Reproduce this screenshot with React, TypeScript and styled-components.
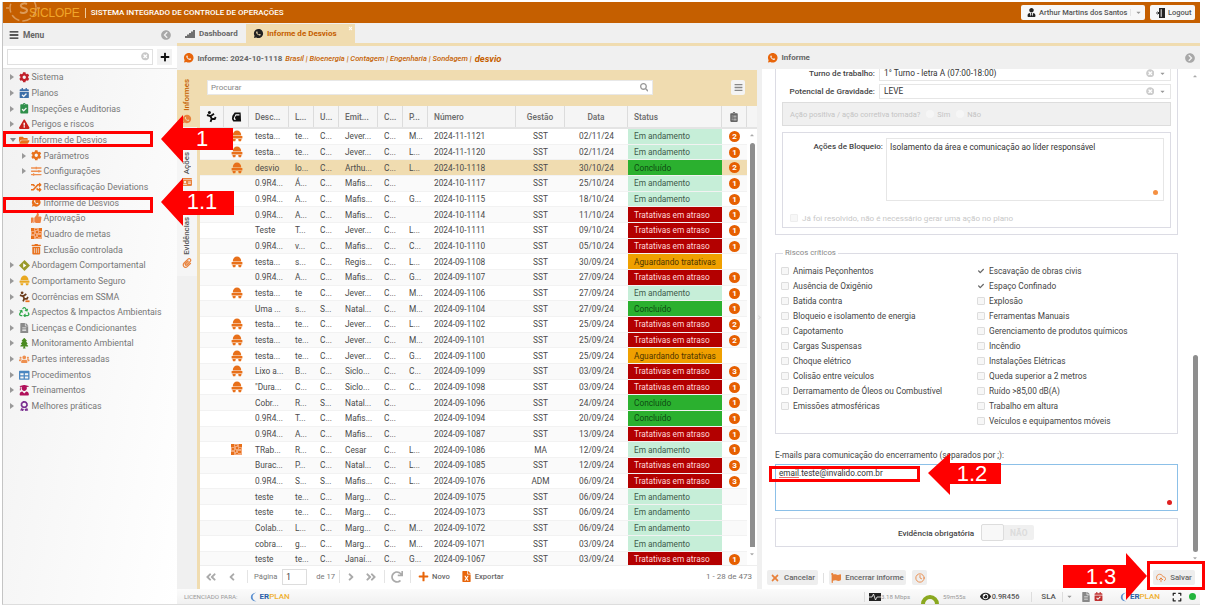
import React from 'react';
import styled, { createGlobalStyle } from 'styled-components';
import {
  FaAngleDoubleLeft,
  FaAngleDoubleRight,
  FaAngleLeft,
  FaAngleRight,
  FaAward,
  FaBars,
  FaCalendarCheck,
  FaCaretDown,
  FaCaretUp,
  FaCheck,
  FaChevronCircleLeft,
  FaChevronCircleRight,
  FaClipboardCheck,
  FaClipboardList,
  FaCog,
  FaExclamationTriangle,
  FaExpand,
  FaEye,
  FaFileAlt,
  FaFileExcel,
  FaFlag,
  FaFolderOpen,
  FaIdCard,
  FaPaperclip,
  FaPlus,
  FaRandom,
  FaRecycle,
  FaRedo,
  FaSearch,
  FaSignal,
  FaSlidersH,
  FaTable,
  FaThumbsUp,
  FaTimes,
  FaTimesCircle,
  FaTrashAlt,
  FaTree,
  FaUsers,
  FaUserGraduate,
  FaUserTie,
} from 'react-icons/fa';
import { FiClock, FiUploadCloud } from 'react-icons/fi';
import { RiWhatsappFill } from 'react-icons/ri';

const ORANGE = '#c55f00';
const BEIGE = '#f0dcb0';
const TABLE_COLUMNS = '24px 25px 40px 25px 25px 39px 25px 25px 88px 49px 63px 94px 25px';

const GlobalStyle = createGlobalStyle`
  html, body {
    margin: 0;
    padding: 0;
    background: #fff;
    overflow: hidden;
    font-family: Roboto, "Liberation Sans", sans-serif;
  }
  * { box-sizing: border-box; }
`;

const Page = styled.div`
  position: relative;
  width: 1205px;
  height: 607px;
  overflow: hidden;
  padding: 2px 5px 2px 2px;
`;

const Frame = styled.div`
  height: 603px;
  display: flex;
  flex-direction: column;
  border-left: 1px solid #c4c4c4;
  border-bottom: 1px solid #ddd;
`;

const Header = styled.header`
  height: 21px;
  flex: none;
  display: flex;
  align-items: center;
  background: ${ORANGE};
  color: #fff;
  overflow: hidden;
  position: relative;
`;

const LogoMark = styled.svg`
  width: 36px;
  height: 32px;
  flex: none;
  margin-left: 2px;
`;

const LogoName = styled.span`
  font-family: 'Liberation Sans', sans-serif;
  font-size: 12px;
  letter-spacing: -0.2px;
  color: #f0a52a;
  margin-left: -12px;
`;

const HeaderTitle = styled.span`
  font-size: 8px;
  font-weight: 500;
  margin-left: 5px;
  padding-left: 5px;
  border-left: 1px solid #eecb9f;
  line-height: 10px;
`;

const HeaderActions = styled.div`
  margin-left: auto;
  display: flex;
  gap: 5px;
  padding-right: 5px;
`;

const HeaderButton = styled.div<{ $width: number }>`
  width: ${(p) => p.$width}px;
  height: 15px;
  display: flex;
  align-items: center;
  gap: 3px;
  padding: 0 5px 0 6px;
  background: #f8f8f8;
  border-radius: 2px;
  color: #555;
  font-size: 7.5px;
  font-weight: 500;
  white-space: nowrap;
  svg { color: #222; font-size: 9px; flex: none; }
`;

const HeaderCaret = styled.span`
  display: flex;
  margin-left: auto;
  padding-left: 4px;
  border-left: 1px solid #e4e4e4;
  svg { color: #999; font-size: 7px; }
`;

const Body = styled.div`
  flex: 1;
  min-height: 0;
  display: flex;
`;

const Sidebar = styled.aside`
  width: 174px;
  flex: none;
  display: flex;
  flex-direction: column;
  background: linear-gradient(100deg, #f1f1f1, #fff);
`;

const SidebarHead = styled.div`
  height: 23px;
  flex: none;
  display: flex;
  align-items: center;
  padding: 0 6px;
  background: #f0f0f0;
  color: #666;
  font-size: 8.4px;
  font-weight: 700;
  svg:first-child { color: #222; font-size: 10px; margin-right: 4px; }
  svg:last-child { color: #a8a8a8; font-size: 10px; margin-left: auto; margin-right: 0; }
`;

const SidebarSearch = styled.div`
  height: 23px;
  flex: none;
  display: flex;
  align-items: center;
  padding: 0 5px 1px 4px;
  gap: 4px;
  background: #fff;
  border-bottom: 1px solid #e2e2e2;
`;

const SearchBox = styled.div`
  flex: 1;
  height: 16px;
  display: flex;
  align-items: center;
  justify-content: flex-end;
  padding-right: 3px;
  border: 1px solid #e0e0e0;
  svg { color: #c8c8c8; font-size: 8.5px; }
`;

const PlusButton = styled.div`
  width: 15px;
  height: 16px;
  display: flex;
  align-items: center;
  justify-content: center;
  background: #f2f2f2;
  svg { color: #111; font-size: 10px; }
`;

const Tree = styled.div`
  padding-top: 0.5px;
  display: flex;
  flex-direction: column;
`;

const TreeRow = styled.div<{ $level: number }>`
  height: 15.67px;
  display: flex;
  align-items: center;
  padding-left: ${(p) => (p.$level ? 19 : 7)}px;
  color: #777;
  font-size: 8.8px;
  white-space: nowrap;
`;

const TreeArrow = styled.span<{ $kind: 'closed' | 'open' | 'none' }>`
  width: 0;
  height: 0;
  flex: none;
  border-style: solid;
  ${(p) =>
    p.$kind === 'open'
      ? 'border-width: 4px 3px 0 3px; border-color: #888 transparent transparent transparent; margin-right: 3px;'
      : `border-width: 3px 0 3px 4px; border-color: transparent transparent transparent ${
          p.$kind === 'closed' ? '#999' : 'transparent'
        }; margin-right: 5px;`}
`;

const TreeIcon = styled.span<{ $color: string }>`
  width: 11px;
  height: 11px;
  flex: none;
  display: flex;
  align-items: center;
  justify-content: center;
  margin-right: 1.5px;
  color: ${(p) => p.$color};
  font-size: 10.5px;
`;

const Main = styled.main`
  flex: 1;
  min-width: 0;
  display: flex;
  flex-direction: column;
  background: #f0f0f0;
`;

const TabBar = styled.nav`
  height: 23px;
  flex: none;
  display: flex;
  padding-left: 3px;
  border-bottom: 3px solid ${BEIGE};
`;

const Tab = styled.div<{ $active?: boolean }>`
  position: relative;
  display: flex;
  align-items: center;
  gap: ${(p) => (p.$active ? 3 : 4)}px;
  margin-top: 1px;
  font-size: 8px;
  font-weight: 700;
  width: ${(p) => (p.$active ? 109 : 66)}px;
  padding-left: ${(p) => (p.$active ? 7 : 5)}px;
  color: ${(p) => (p.$active ? ORANGE : '#666')};
  background: ${(p) => (p.$active ? BEIGE : 'transparent')};
  svg { color: #222; font-size: ${(p) => (p.$active ? 11 : 10)}px; flex: none; }
`;

const TabClose = styled.span`
  position: absolute;
  top: 2px;
  right: 2px;
  display: flex;
  svg { color: #fff; font-size: 5px; }
`;

const Workspace = styled.div`
  flex: 1;
  min-height: 0;
  display: flex;
`;

const LeftPanel = styled.section`
  width: 580px;
  flex: none;
  display: flex;
  flex-direction: column;
`;

const PanelTitle = styled.div`
  height: 24px;
  flex: none;
  display: flex;
  align-items: center;
  padding: 0 6px;
  color: #666;
  font-size: 8px;
  font-weight: 700;
  white-space: nowrap;
`;

const PanelIcon = styled.span`
  display: flex;
  margin-right: 3px;
  color: #e8650a;
  font-size: 11.5px;
`;

const Crumbs = styled.span`
  margin-left: 3px;
  color: ${ORANGE};
  font-size: 7.6px;
  font-style: italic;
  font-weight: 500;
`;

const CrumbLast = styled.span`
  color: ${ORANGE};
  font-size: 9.4px;
  font-style: italic;
  font-weight: 700;
  margin-left: 3px;
`;

const PanelBody = styled.div`
  flex: 1;
  min-height: 0;
  display: flex;
`;

const VTabs = styled.div`
  width: 20px;
  flex: none;
  display: flex;
  flex-direction: column;
`;

const VTab = styled.div<{ $active?: boolean; $top: number; $height: number }>`
  height: ${(p) => p.$height}px;
  padding-top: ${(p) => p.$top}px;
  display: flex;
  flex-direction: column;
  align-items: center;
  gap: 3px;
  background: ${(p) => (p.$active ? BEIGE : '#f5f5f5')};
  color: ${(p) => (p.$active ? ORANGE : '#555')};
  font-size: 7.9px;
  font-weight: 500;
  svg { color: #e8813a; font-size: 10px; }
`;

const VLabel = styled.span`
  writing-mode: vertical-rl;
  transform: rotate(180deg);
  line-height: 12px;
`;

const ListArea = styled.div`
  flex: 1;
  min-width: 0;
  display: flex;
  flex-direction: column;
  border-left: 3px solid ${BEIGE};
  background: #fff;
`;

const ListToolbar = styled.div`
  height: 36px;
  flex: none;
  display: flex;
  align-items: flex-start;
  padding: 10px 12px 0 7px;
  background: ${BEIGE};
`;

const FindBox = styled.div`
  width: 446px;
  height: 15px;
  display: flex;
  align-items: center;
  justify-content: space-between;
  padding: 0 4px 0 3px;
  background: #fff;
  border: 1px solid #e8e8e8;
  color: #888;
  font-size: 8px;
  svg { color: #999; font-size: 8.5px; }
`;

const MenuButton = styled.div`
  width: 14px;
  height: 15px;
  margin-left: auto;
  display: flex;
  align-items: center;
  justify-content: center;
  background: #f4f4f4;
  border-radius: 2px;
  svg { color: #888; font-size: 9px; }
`;

const TableHead = styled.div`
  height: 23px;
  flex: none;
  display: grid;
  grid-template-columns: ${TABLE_COLUMNS} 10px;
  background: #f5f5f5;
  border-bottom: 2px solid #e4e4e4;
`;

const HeadCell = styled.div<{ $center?: boolean }>`
  display: flex;
  align-items: center;
  justify-content: ${(p) => (p.$center ? 'center' : 'flex-start')};
  padding: 0 ${(p) => (p.$center ? 0 : 6)}px;
  border-right: 1px solid #dcdcdc;
  color: #6a6a6a;
  font-size: 8.3px;
  font-weight: 500;
  white-space: nowrap;
  &:last-child { border-right: none; }
  & > svg { color: #666; font-size: 10px; }
`;

const TableBody = styled.div`
  flex: 1;
  min-height: 0;
  display: flex;
  overflow: hidden;
`;

const Rows = styled.div`
  width: 547px;
  flex: none;
`;

const Row = styled.div<{ $selected: boolean; $even: boolean }>`
  height: 15.68px;
  display: grid;
  grid-template-columns: ${TABLE_COLUMNS};
  align-items: stretch;
  background: ${(p) => (p.$selected ? BEIGE : p.$even ? '#fafafa' : '#fff')};
  border-bottom: 1px solid #f2f2f2;
  color: #4a4a4a;
  font-size: 8.3px;
`;

const Cell = styled.div<{ $center?: boolean }>`
  display: flex;
  align-items: center;
  justify-content: ${(p) => (p.$center ? 'center' : 'flex-start')};
  padding: 0 ${(p) => (p.$center ? 0 : 6)}px;
  white-space: nowrap;
  overflow: hidden;
`;

const STATUS_COLORS: Record<string, [string, string]> = {
  'Em andamento': ['#c6eed8', '#3d5a4a'],
  Concluído: ['#2bb02f', '#0d4a12'],
  'Tratativas em atraso': ['#b30000', '#ffd9d9'],
  'Aguardando tratativas': ['#f0a000', '#4d3500'],
};

const StatusCell = styled.div<{ $status: string }>`
  display: flex;
  align-items: center;
  padding: 0 6px;
  white-space: nowrap;
  background: ${(p) => STATUS_COLORS[p.$status][0]};
  color: ${(p) => STATUS_COLORS[p.$status][1]};
`;

const Badge = styled.span`
  width: 11px;
  height: 11px;
  border-radius: 50%;
  display: flex;
  align-items: center;
  justify-content: center;
  background: #e65f00;
  color: #fff;
  font-size: 8px;
  font-weight: 700;
`;

const Scrollbar = styled.div<{ $height: number; $thumbTop: number; $arrowGap: number }>`
  width: 10px;
  flex: none;
  display: flex;
  flex-direction: column;
  align-items: center;
  height: ${(p) => p.$height}px;
  padding-top: 3px;
  svg { color: #aaa; font-size: 6px; flex: none; }
  i {
    display: block;
    width: 5px;
    height: ${(p) => p.$thumbTop}px;
    margin: ${(p) => p.$arrowGap}px 0 4px;
    background: #8e8e8e;
    border-radius: 3px 3px 0 0;
    flex: none;
  }
`;

const Pager = styled.div`
  height: 24px;
  flex: none;
  display: flex;
  align-items: center;
  padding: 0 5px 2px 5px;
  background: #fff;
  border-top: 1px solid #eee;
  color: #777;
  font-size: 7.6px;
`;

const PagerIcon = styled.span<{ $gap: number }>`
  display: flex;
  margin-right: ${(p) => p.$gap}px;
  color: #aaa;
  font-size: 12px;
`;

const PagerSep = styled.span<{ $gap: number; $left?: number }>`
  width: 1px;
  height: 13px;
  margin-left: ${(p) => p.$left || 0}px;
  margin-right: ${(p) => p.$gap}px;
  background: #e4e4e4;
`;

const PageInput = styled.span`
  width: 25px;
  height: 16px;
  margin: 0 9px 0 5px;
  padding-left: 3px;
  display: flex;
  align-items: center;
  border: 1px solid #ddd;
  color: #333;
  font-size: 8.2px;
`;

const PagerAction = styled.span<{ $color: string; $gap: number }>`
  display: flex;
  align-items: center;
  gap: 3px;
  margin-right: ${(p) => p.$gap}px;
  color: #666;
  font-weight: 500;
  svg { color: ${(p) => p.$color}; font-size: 11px; }
`;

const PagerTotal = styled.span`
  margin-left: auto;
  font-size: 8px;
`;

const Splitter = styled.div`
  width: 5px;
  flex: none;
  display: flex;
  align-items: center;
  justify-content: center;
  svg { color: #dcdcdc; font-size: 7px; flex: none; }
`;

const RightPanel = styled.section`
  flex: 1;
  min-width: 0;
  display: flex;
  flex-direction: column;
`;

const RightTitle = styled(PanelTitle)`
  height: 23px;
  padding: 0 5px 0 5px;
  & > svg { margin-left: auto; color: #a8a8a8; font-size: 10px; }
`;

const RightBody = styled.div`
  flex: 1;
  min-height: 0;
  display: flex;
  background: #fff;
  overflow: hidden;
`;

const FormColumn = styled.div`
  width: 416px;
  flex: none;
  padding-left: 13px;
  color: #444;
  font-size: 8.1px;
`;

const TopGroup = styled.div`
  display: flow-root;
  height: 166px;
  padding: 0 6px 0 6px;
  border: 1px solid #dcdce4;
  border-top: none;
`;

const FieldRow = styled.div`
  height: 15px;
  margin-bottom: 3px;
  display: flex;
  align-items: center;
  &:first-child { margin-top: -3px; }
`;

const FieldLabel = styled.label`
  width: 97px;
  flex: none;
  padding: 0 4px 1px 0;
  text-align: right;
  font-weight: 500;
  white-space: nowrap;
`;

const SelectBox = styled.div`
  flex: 1;
  height: 100%;
  display: flex;
  align-items: center;
  padding: 0 4px 1px;
  border: 1px solid #e6e6e6;
  color: #333;
  font-size: 8.3px;
`;

const SelectIcons = styled.span`
  margin-left: auto;
  display: flex;
  align-items: center;
  gap: 5px;
  svg:first-child { color: #ccc; font-size: 8.5px; }
  svg:last-child { color: #999; font-size: 7px; }
`;

const DisabledBox = styled.div`
  height: 24px;
  display: flex;
  align-items: center;
  gap: 6px;
  padding-left: 7px;
  background: #f0f0f0;
  border: 1px solid #dddddd;
  color: #c4c4c4;
  font-size: 7.5px;
`;

const Radio = styled.span`
  display: inline-flex;
  align-items: center;
  gap: 3px;
  &::before {
    content: '';
    width: 8px;
    height: 8px;
    border-radius: 50%;
    background: #f6f6f6;
  }
`;

const BlockBox = styled.div`
  height: 96px;
  margin-top: 6px;
  padding: 5px 6px 0 7px;
  border: 1px solid #dcdce4;
`;

const BlockRow = styled.div`
  height: 63px;
  display: flex;
`;

const BlockLabel = styled.label`
  width: 96px;
  flex: none;
  padding: 3px 3px 0 0;
  text-align: right;
  font-weight: 500;
`;

const TextBox = styled.div`
  position: relative;
  flex: 1;
  padding: 3px 3px;
  border: 1px solid #e6e6e6;
  color: #333;
  font-size: 8.3px;
  line-height: 10px;
`;

const CornerDot = styled.span<{ $color: string }>`
  position: absolute;
  right: 5px;
  bottom: 5px;
  width: 5px;
  height: 5px;
  border-radius: 50%;
  background: ${(p) => p.$color};
`;

const ResolvedRow = styled.div`
  display: flex;
  align-items: center;
  gap: 4px;
  margin-top: 12px;
  color: #c8c8c8;
  font-size: 8.1px;
`;

const CheckSquare = styled.span<{ $checked?: boolean; $faded?: boolean }>`
  width: 8px;
  height: 8px;
  flex: none;
  display: flex;
  align-items: center;
  justify-content: center;
  border-radius: 1px;
  border: 1px solid ${(p) => (p.$checked ? 'transparent' : p.$faded ? '#eee' : '#ddd')};
  background: ${(p) => (p.$checked ? 'transparent' : '#f7f7f7')};
  svg { color: #666; font-size: 8px; }
`;

const RiskGroup = styled.fieldset`
  height: 185px;
  margin: 14px 0 0;
  padding: 6px 6px 0 5px;
  border: 1px solid #dcdce4;
  display: grid;
  grid-template-columns: 196px 1fr;
  grid-auto-rows: 15px;
  column-gap: 0;
`;

const RiskLegend = styled.legend`
  padding: 0 2px;
  margin-left: 2px;
  color: #888;
  font-size: 7.8px;
  line-height: 8px;
`;

const RiskColumn = styled.div`
  display: contents;
`;

const RiskItem = styled.div<{ $col: number }>`
  grid-column: ${(p) => p.$col};
  display: flex;
  align-items: center;
  gap: 4px;
  color: #444;
  font-size: 8.3px;
  white-space: nowrap;
`;

const EmailLabel = styled.div`
  margin-top: 16px;
  height: 11px;
  line-height: 11px;
  color: #444;
  font-size: 8.3px;
`;

const EmailBox = styled.div`
  position: relative;
  height: 47px;
  margin-top: 3px;
  padding: 3px 3px;
  border: 1px solid #8cc0e8;
  color: #333;
  font-size: 8.2px;
`;

const Misspelled = styled.span`
  text-decoration: underline #e87070 1px;
`;

const EvidenceBox = styled.div`
  height: 29px;
  margin-top: 7px;
  padding-left: 122px;
  display: flex;
  align-items: center;
  gap: 7px;
  border: 1px solid #dcdce4;
  font-weight: 500;
`;

const Toggle = styled.span`
  width: 53px;
  height: 15px;
  display: flex;
  background: #f0f0f0;
  border-radius: 2px;
  color: #dcdcdc;
  font-size: 8.4px;
  font-weight: 700;
  align-items: center;
  gap: 6px;
  &::before {
    content: '';
    width: 21px;
    height: 15px;
    background: #f8f8f8;
    border: 1px solid #ddd;
    border-radius: 2px;
  }
`;

const FormScroll = styled.div`
  flex: 1;
  display: flex;
  flex-direction: column;
  align-items: center;
  padding: 4px 0 0 12px;
  svg { color: #aaa; font-size: 6px; flex: none; }
  i {
    display: block;
    width: 5px;
    height: 197px;
    margin: 276px 0 3px;
    background: #8e8e8e;
    border-radius: 3px;
    flex: none;
  }
`;

const ActionBar = styled.div`
  height: 23px;
  flex: none;
  display: flex;
  align-items: center;
  padding: 0 5px;
  background: #fff;
`;

const ActionButton = styled.div<{ $width: number }>`
  width: ${(p) => p.$width}px;
  height: 15px;
  display: flex;
  align-items: center;
  justify-content: center;
  gap: 4px;
  background: #eeeeee;
  border-radius: 2px;
  color: #666;
  font-size: 7.8px;
  font-weight: 500;
  svg { color: #e8813a; font-size: 10px; }
`;

const ActionSep = styled.span`
  width: 1px;
  height: 10px;
  margin: 0 5px;
  background: #e0e0e0;
`;

const ActionSpacer = styled.span`
  width: 6px;
`;

const ActionSave = styled(ActionButton)`
  margin-left: auto;
`;

const StatusBar = styled.footer`
  height: 15px;
  flex: none;
  display: flex;
  align-items: center;
  padding-left: 7px;
  background: linear-gradient(#fbfbfb, #f1f1f1);
  color: #999;
  font-size: 6.2px;
`;

const BrandMark = styled.span<{ $margin: number }>`
  display: flex;
  align-items: center;
  gap: 2px;
  margin-left: ${(p) => p.$margin}px;
  font-size: 8px;
  font-weight: 700;
  b { color: #2a5fa8; font-weight: 700; }
  em { color: #f0b030; font-style: normal; font-weight: 500; }
`;

const BrandMoon = styled.svg`
  width: 8px;
  height: 10px;
`;

const StatusRight = styled.div`
  margin-left: auto;
  display: flex;
  align-items: center;
  height: 100%;
  padding-right: 4px;
`;

const StatusText = styled.span<{ $size: number; $strong?: boolean; $margin: number }>`
  display: flex;
  align-items: center;
  margin-left: ${(p) => p.$margin}px;
  font-size: ${(p) => p.$size}px;
  color: ${(p) => (p.$strong ? '#555' : '#999')};
  font-weight: ${(p) => (p.$strong ? 500 : 400)};
  white-space: nowrap;
`;

const StatusGlyph = styled.span<{ $margin: number; $color: string; $size: number }>`
  display: flex;
  margin-left: ${(p) => p.$margin}px;
  color: ${(p) => p.$color};
  font-size: ${(p) => p.$size}px;
`;

const StatusDivider = styled.span<{ $margin: number }>`
  width: 1px;
  height: 10px;
  margin-left: ${(p) => p.$margin}px;
  background: #ddd;
`;

const PulseMark = styled.svg`
  width: 12px;
  height: 8px;
`;

const GaugeMark = styled.svg`
  width: 18px;
  height: 11px;
  margin: 4px 0 0 11px;
  align-self: flex-start;
`;

const GreenDot = styled.span`
  width: 7px;
  height: 7px;
  margin-left: 7px;
  border-radius: 50%;
  background: #22b43c;
`;

const RedBox = styled.div<{ $x: number; $y: number; $w: number; $h: number }>`
  position: absolute;
  left: ${(p) => p.$x}px;
  top: ${(p) => p.$y}px;
  width: ${(p) => p.$w}px;
  height: ${(p) => p.$h}px;
  border: 3px solid #f00;
`;

const Callout = styled.div<{ $x: number; $y: number; $w: number; $h: number }>`
  position: absolute;
  left: ${(p) => p.$x}px;
  top: ${(p) => p.$y}px;
  width: ${(p) => p.$w}px;
  height: ${(p) => p.$h}px;
  svg { display: block; width: 100%; height: 100%; }
`;

const CalloutText = styled.span<{ $center: number }>`
  position: absolute;
  top: 0;
  bottom: 0;
  left: ${(p) => p.$center - 30}px;
  width: 60px;
  display: flex;
  align-items: center;
  justify-content: center;
  color: #fff;
  font-family: 'Liberation Sans', sans-serif;
  font-size: 22px;
`;

const HatIcon = ({ color = '#e8701a', size = 12 }: { color?: string; size?: number }) => (
  <svg width={size} height={size} viewBox="0 0 12 12" fill={color}>
    <path d="M1.7 5.4C1.9 2.4 3.8 0.6 6 0.6s4.1 1.8 4.3 4.8z" />
    <rect x="0.6" y="6" width="10.8" height="2.5" rx="0.6" />
    <path d="M1.4 9.1h3.4l-.5 2.2H2zM7.2 9.1h3.4l-.6 2.2H7.7z" />
  </svg>
);

const QrIcon = () => (
  <svg width="11" height="11" viewBox="0 0 11 11">
    <rect width="11" height="11" fill="#f4a878" />
    <path
      d="M0 0h3v3H0zM8 0h3v3H8zM0 8h3v3H0zM4 1h2v1H4zM5 3h2v2H5zM1 4h2v2H1zM8 4h2v1H8zM4 6h1v2H4zM7 7h3v2H7zM5 9h2v1H5z"
      fill="#e8701a"
    />
  </svg>
);

const FallingMan = ({ color = '#111', accent }: { color?: string; accent?: string }) => (
  <svg width="12" height="13" viewBox="0 0 12 12" fill="none" stroke={color} strokeWidth="1.9">
    <circle cx="3.4" cy="2" r="1.5" fill={color} stroke="none" />
    <path d="M1 4.5l3.5 1.2L8 3.2M4.5 5.7l1.2 2.6-1.2 3M5.7 8.3l3 .2 1-2" />
    {accent && <path d="M7 11.2h4.5" stroke={accent} />}
  </svg>
);

const BootIcon = () => (
  <svg width="11" height="12" viewBox="0 0 12 12">
    <path d="M4 1h6.5l.5 10H2.5L1 8.2l.4-3.4z" fill="#111" />
    <path d="M5 3h4.2v1.4H5.6L4.2 6.6l1 2.6H3.8L2.9 7.6z" fill="#fff" />
  </svg>
);

const DiamondIcon = () => (
  <svg width="11" height="11" viewBox="0 0 12 12">
    <path d="M6 0l6 6-6 6-6-6z" fill="#9a9a2a" />
    <path d="M4.6 3.6L8 6 4.6 8.4z" fill="#fff" />
  </svg>
);

const DoorIcon = () => (
  <svg width="9" height="10" viewBox="0 0 9 10">
    <path d="M3 0h6v10H3z" fill="#222" />
    <path d="M5.2 1.2v7.6" stroke="#fff" strokeWidth="0.9" />
    <path d="M0 5h3M1.6 3.6L3 5 1.6 6.4" fill="none" stroke="#222" strokeWidth="0.9" />
  </svg>
);

const TREE = [
  { label: 'Sistema', color: '#c0202a', icon: <FaCog />, arrow: 'closed', level: 0 },
  { label: 'Planos', color: '#3c6ea8', icon: <FaCalendarCheck />, arrow: 'closed', level: 0 },
  { label: 'Inspeções e Auditorias', color: '#2f8f4a', icon: <FaClipboardCheck />, arrow: 'closed', level: 0 },
  { label: 'Perigos e riscos', color: '#c8201c', icon: <FaExclamationTriangle />, arrow: 'closed', level: 0 },
  { label: 'Informe de Desvios', color: '#e8701a', icon: <FaFolderOpen />, arrow: 'open', level: 0 },
  { label: 'Parâmetros', color: '#e8701a', icon: <FaCog />, arrow: 'closed', level: 1 },
  { label: 'Configurações', color: '#ee9050', icon: <FaSlidersH />, arrow: 'closed', level: 1 },
  { label: 'Reclassificação Deviations', color: '#e8701a', icon: <FaRandom />, arrow: 'none', level: 1 },
  { label: 'Informe de Desvios', color: '#e8701a', icon: <RiWhatsappFill />, arrow: 'none', level: 1 },
  { label: 'Aprovação', color: '#ee8040', icon: <FaThumbsUp />, arrow: 'none', level: 1 },
  { label: 'Quadro de metas', color: '#f0a878', icon: <QrIcon />, arrow: 'none', level: 1 },
  { label: 'Exclusão controlada', color: '#e8701a', icon: <FaTrashAlt />, arrow: 'none', level: 1 },
  { label: 'Abordagem Comportamental', color: '#9a9a2a', icon: <DiamondIcon />, arrow: 'closed', level: 0 },
  { label: 'Comportamento Seguro', color: '#e9a820', icon: <HatIcon color="#e9a820" size={11} />, arrow: 'closed', level: 0 },
  { label: 'Ocorrências em SSMA', color: '#333', icon: <FallingMan color="#6b3b1a" accent="#e8701a" />, arrow: 'closed', level: 0 },
  { label: 'Aspectos & Impactos Ambientais', color: '#2fa84a', icon: <FaRecycle />, arrow: 'closed', level: 0 },
  { label: 'Licenças e Condicionantes', color: '#8a8a8a', icon: <FaFileAlt />, arrow: 'closed', level: 0 },
  { label: 'Monitoramento Ambiental', color: '#4a8a20', icon: <FaTree />, arrow: 'closed', level: 0 },
  { label: 'Partes interessadas', color: '#ee9050', icon: <FaUsers />, arrow: 'closed', level: 0 },
  { label: 'Procedimentos', color: '#4a86c0', icon: <FaTable />, arrow: 'closed', level: 0 },
  { label: 'Treinamentos', color: '#b0105a', icon: <FaUserGraduate />, arrow: 'closed', level: 0 },
  { label: 'Melhores práticas', color: '#7a3090', icon: <FaAward />, arrow: 'closed', level: 0 },
] as const;

const EM = 'Em andamento';
const OK = 'Concluído';
const LATE = 'Tratativas em atraso';
const WAIT = 'Aguardando tratativas';

type RowData = [string, string, string, string, string, string, string, string, string, string, number];

const ROWS: RowData[] = [
  ['testa...', 'te...', 'C...', 'Jever...', 'M...', '2024-11-1121', 'SST', '02/11/24', EM, 'hat', 2],
  ['testa...', 'te...', 'C...', 'Jever...', 'L...', '2024-11-1120', 'SST', '02/11/24', EM, 'hat', 1],
  ['desvio', 'lo...', 'C...', 'Arthu...', 'L...', '2024-10-1118', 'SST', '30/10/24', OK, 'hat', 2],
  ['0.9R4...', 'Á...', 'C...', 'Mafis...', '', '2024-10-1117', 'SST', '25/10/24', EM, '', 1],
  ['0.9R4...', 'A...', 'C...', 'Mafis...', 'G...', '2024-10-1115', 'SST', '18/10/24', EM, '', 1],
  ['0.9R4...', 'A...', 'C...', 'Mafis...', '', '2024-10-1114', 'SST', '11/10/24', LATE, '', 1],
  ['Teste', 'T...', 'C...', 'Jever...', 'L...', '2024-10-1111', 'SST', '09/10/24', LATE, '', 1],
  ['0.9R4...', 'v...', 'C...', 'Mafis...', 'C...', '2024-10-1110', 'SST', '05/10/24', LATE, '', 1],
  ['testa...', 's...', 'C...', 'Regis...', 'L...', '2024-09-1108', 'SST', '30/09/24', WAIT, 'hat', 0],
  ['0.9R4...', 'A...', 'C...', 'Mafis...', 'G...', '2024-09-1107', 'SST', '27/09/24', LATE, '', 1],
  ['testa...', 'te', 'C...', 'Jever...', 'M...', '2024-09-1106', 'SST', '27/09/24', EM, 'hat', 1],
  ['Uma ...', 's...', 'S...', 'Natal...', 'M...', '2024-09-1104', 'SST', '27/09/24', OK, '', 1],
  ['testa...', 'te...', 'C...', 'Jever...', 'L...', '2024-09-1102', 'SST', '25/09/24', LATE, 'hat', 2],
  ['testa...', 'te...', 'C...', 'Jever...', 'M...', '2024-09-1101', 'SST', '25/09/24', LATE, 'hat', 2],
  ['testa...', 'te...', 'C...', 'Jever...', 'G...', '2024-09-1100', 'SST', '25/09/24', WAIT, 'hat', 0],
  ['Lixo a...', 'B...', 'C...', 'Siclo...', 'C...', '2024-09-1099', 'SST', '03/09/24', LATE, 'hat', 3],
  ['"Dura...', 'C...', 'C...', 'Siclo...', 'C...', '2024-09-1098', 'SST', '03/09/24', LATE, 'hat', 1],
  ['Cobr...', 'R...', 'S...', 'Natal...', '', '2024-09-1096', 'SST', '24/09/24', OK, '', 1],
  ['0.9R4...', 'T...', 'C...', 'Mafis...', '', '2024-09-1094', 'SST', '20/09/24', OK, '', 1],
  ['0.9R4...', 'A...', 'C...', 'Mafis...', '', '2024-09-1087', 'SST', '13/09/24', LATE, '', 1],
  ['TRab...', 'R...', 'C...', 'Cesar', 'L...', '2024-09-1086', 'MA', '12/09/24', EM, 'qr', 1],
  ['Burac...', 'P...', 'C...', 'Natal...', 'L...', '2024-09-1085', 'SST', '12/09/24', LATE, '', 3],
  ['0.9R4...', 'S...', 'S...', 'Mafis...', 'L...', '2024-09-1076', 'ADM', '06/09/24', LATE, '', 3],
  ['teste', 'te...', 'C...', 'Marg...', '', '2024-09-1075', 'SST', '06/09/24', EM, '', 0],
  ['teste', 'te...', 'C...', 'Marg...', '', '2024-09-1073', 'SST', '06/09/24', EM, '', 0],
  ['Colab...', 'L...', 'C...', 'Marg...', 'M...', '2024-09-1072', 'SST', '06/09/24', EM, '', 0],
  ['cobra...', 'g...', 'C...', 'Marg...', 'M...', '2024-09-1071', 'SST', '03/09/24', EM, '', 0],
  ['teste', 'te...', 'C...', 'Janaí...', 'G...', '2024-09-1067', 'SST', '03/09/24', LATE, '', 1],
];

const RISKS_LEFT = [
  'Animais Peçonhentos',
  'Ausência de Oxigênio',
  'Batida contra',
  'Bloqueio e isolamento de energia',
  'Capotamento',
  'Cargas Suspensas',
  'Choque elétrico',
  'Colisão entre veículos',
  'Derramamento de Óleos ou Combustível',
  'Emissões atmosféricas',
];

const RISKS_RIGHT = [
  'Escavação de obras civis',
  'Espaço Confinado',
  'Explosão',
  'Ferramentas Manuais',
  'Gerenciamento de produtos químicos',
  'Incêndio',
  'Instalações Elétricas',
  'Queda superior a 2 metros',
  'Ruído >85,00 dB(A)',
  'Trabalho em altura',
  'Veículos e equipamentos móveis',
];

const Brand = ({ margin }: { margin: number }) => (
  <BrandMark $margin={margin}>
    <BrandMoon viewBox="0 0 8 10">
      <path d="M6 0.5C2.5 1 0.8 3 0.8 5.2S2.5 9.2 6.5 9.5C3.8 8.5 2.6 7 2.6 5S3.8 1.6 6 0.5z" fill="#5a8fd0" />
    </BrandMoon>
    <span>
      <b>ER</b>
      <em>PLAN</em>
    </span>
  </BrandMark>
);

const TableRow = ({ row, selected, even }: { row: RowData; selected: boolean; even: boolean }) => {
  const [desc, loc, unit, author, type, number, mgmt, date, status, mark, count] = row;
  return (
    <Row $selected={selected} $even={even}>
      <Cell />
      <Cell $center>
        {mark === 'hat' && <HatIcon />}
        {mark === 'qr' && <QrIcon />}
      </Cell>
      <Cell>{desc}</Cell>
      <Cell>{loc}</Cell>
      <Cell>{unit}</Cell>
      <Cell>{author}</Cell>
      <Cell>C...</Cell>
      <Cell>{type}</Cell>
      <Cell>{number}</Cell>
      <Cell $center>{mgmt}</Cell>
      <Cell $center>{date}</Cell>
      <StatusCell $status={status}>{status}</StatusCell>
      <Cell $center>{count > 0 && <Badge>{count}</Badge>}</Cell>
    </Row>
  );
};

const App = () => (
  <Page>
    <GlobalStyle />
    <Frame>
      <Header>
        <LogoMark viewBox="0 0 36 32">
          <circle cx="18" cy="11" r="13" fill="none" stroke="#dc9a58" strokeWidth="1.5" strokeDasharray="9 3" />
          <path d="M22 7c-3-1.6-7 0-6 2.4s6 1.4 6 3.8-4 3.6-7 2" fill="none" stroke="#dc9a58" strokeWidth="2" />
          <path d="M1 11h3M32 11h3" stroke="#dc9a58" strokeWidth="1.5" />
        </LogoMark>
        <LogoName>SICLOPE</LogoName>
        <HeaderTitle>SISTEMA INTEGRADO DE CONTROLE DE OPERAÇÕES</HeaderTitle>
        <HeaderActions>
          <HeaderButton $width={124}>
            <FaUserTie />
            Arthur Martins dos Santos
            <HeaderCaret>
              <FaCaretDown />
            </HeaderCaret>
          </HeaderButton>
          <HeaderButton $width={45}>
            <DoorIcon />
            Logout
          </HeaderButton>
        </HeaderActions>
      </Header>
      <Body>
        <Sidebar>
          <SidebarHead>
            <FaBars />
            Menu
            <FaChevronCircleLeft />
          </SidebarHead>
          <SidebarSearch>
            <SearchBox>
              <FaTimesCircle />
            </SearchBox>
            <PlusButton>
              <FaPlus />
            </PlusButton>
          </SidebarSearch>
          <Tree>
            {TREE.map((item, i) => (
              <TreeRow key={i} $level={item.level}>
                <TreeArrow $kind={item.arrow} />
                <TreeIcon $color={item.color}>{item.icon}</TreeIcon>
                {item.label}
              </TreeRow>
            ))}
          </Tree>
        </Sidebar>
        <Main>
          <TabBar>
            <Tab>
              <FaSignal />
              Dashboard
            </Tab>
            <Tab $active>
              <RiWhatsappFill />
              Informe de Desvios
              <TabClose>
                <FaTimes />
              </TabClose>
            </Tab>
          </TabBar>
          <Workspace>
            <LeftPanel>
              <PanelTitle>
                <PanelIcon>
                  <RiWhatsappFill />
                </PanelIcon>
                Informe: 2024-10-1118
                <Crumbs>Brasil | Bioenergia | Contagem | Engenharia | Sondagem |</Crumbs>
                <CrumbLast>desvio</CrumbLast>
              </PanelTitle>
              <PanelBody>
                <VTabs>
                  <VTab $active $top={9} $height={57}>
                    <VLabel>Informes</VLabel>
                    <RiWhatsappFill />
                  </VTab>
                  <VTab $top={25} $height={65}>
                    <VLabel>Ações</VLabel>
                    <FaIdCard />
                  </VTab>
                  <VTab $top={25} $height={84}>
                    <VLabel>Evidências</VLabel>
                    <FaPaperclip />
                  </VTab>
                </VTabs>
                <ListArea>
                  <ListToolbar>
                    <FindBox>
                      Procurar
                      <FaSearch />
                    </FindBox>
                    <MenuButton>
                      <FaBars />
                    </MenuButton>
                  </ListToolbar>
                  <TableHead>
                    <HeadCell $center>
                      <FallingMan />
                    </HeadCell>
                    <HeadCell $center>
                      <BootIcon />
                    </HeadCell>
                    <HeadCell>Desc...</HeadCell>
                    <HeadCell>L...</HeadCell>
                    <HeadCell>U...</HeadCell>
                    <HeadCell>Emit...</HeadCell>
                    <HeadCell>C...</HeadCell>
                    <HeadCell>P...</HeadCell>
                    <HeadCell>Número</HeadCell>
                    <HeadCell $center>Gestão</HeadCell>
                    <HeadCell $center>Data</HeadCell>
                    <HeadCell>Status</HeadCell>
                    <HeadCell $center>
                      <FaClipboardList />
                    </HeadCell>
                    <HeadCell />
                  </TableHead>
                  <TableBody>
                    <Rows>
                      {ROWS.map((row, i) => (
                        <TableRow key={row[5]} row={row} selected={i === 2} even={i % 2 === 1} />
                      ))}
                    </Rows>
                    <Scrollbar $height={437} $thumbTop={404} $arrowGap={5}>
                      <FaCaretUp />
                      <i />
                      <FaCaretDown />
                    </Scrollbar>
                  </TableBody>
                  <Pager>
                    <PagerIcon $gap={9}>
                      <FaAngleDoubleLeft />
                    </PagerIcon>
                    <PagerIcon $gap={9}>
                      <FaAngleLeft />
                    </PagerIcon>
                    <PagerSep $gap={6} />
                    Página
                    <PageInput>1</PageInput>
                    de 17
                    <PagerSep $gap={5} $left={4} />
                    <PagerIcon $gap={8}>
                      <FaAngleRight />
                    </PagerIcon>
                    <PagerIcon $gap={7}>
                      <FaAngleDoubleRight />
                    </PagerIcon>
                    <PagerSep $gap={6} />
                    <PagerIcon $gap={7}>
                      <FaRedo />
                    </PagerIcon>
                    <PagerSep $gap={7} />
                    <PagerAction $color="#e8650a" $gap={11}>
                      <FaPlus />
                      Novo
                    </PagerAction>
                    <PagerAction $color="#e8650a" $gap={0}>
                      <FaFileExcel />
                      Exportar
                    </PagerAction>
                    <PagerTotal>1 - 28 de 473</PagerTotal>
                  </Pager>
                </ListArea>
              </PanelBody>
            </LeftPanel>
            <Splitter>
              <FaAngleRight />
            </Splitter>
            <RightPanel>
              <RightTitle>
                <PanelIcon>
                  <RiWhatsappFill />
                </PanelIcon>
                Informe
                <FaChevronCircleRight />
              </RightTitle>
              <RightBody>
                <FormColumn>
                  <TopGroup>
                    <FieldRow>
                      <FieldLabel>Turno de trabalho:</FieldLabel>
                      <SelectBox>
                        1° Turno - letra A (07:00-18:00)
                        <SelectIcons>
                          <FaTimesCircle />
                          <FaCaretDown />
                        </SelectIcons>
                      </SelectBox>
                    </FieldRow>
                    <FieldRow>
                      <FieldLabel>Potencial de Gravidade:</FieldLabel>
                      <SelectBox>
                        LEVE
                        <SelectIcons>
                          <FaTimesCircle />
                          <FaCaretDown />
                        </SelectIcons>
                      </SelectBox>
                    </FieldRow>
                    <DisabledBox>
                      Ação positiva / ação corretiva tomada?
                      <Radio>Sim</Radio>
                      <Radio>Não</Radio>
                    </DisabledBox>
                    <BlockBox>
                      <BlockRow>
                        <BlockLabel>Ações de Bloqueio:</BlockLabel>
                        <TextBox>
                          Isolamento da área e comunicação ao líder responsável
                          <CornerDot $color="#f59042" />
                        </TextBox>
                      </BlockRow>
                      <ResolvedRow>
                        <CheckSquare $faded />
                        Já foi resolvido, não é necessário gerar uma ação no plano
                      </ResolvedRow>
                    </BlockBox>
                  </TopGroup>
                  <RiskGroup>
                    <RiskLegend>Riscos críticos</RiskLegend>
                    <RiskColumn>
                      {RISKS_RIGHT.map((name, i) => (
                        <React.Fragment key={name}>
                          <RiskItem $col={1}>
                            {RISKS_LEFT[i] && <CheckSquare />}
                            {RISKS_LEFT[i]}
                          </RiskItem>
                          <RiskItem $col={2}>
                            <CheckSquare $checked={i < 2}>{i < 2 && <FaCheck />}</CheckSquare>
                            {name}
                          </RiskItem>
                        </React.Fragment>
                      ))}
                    </RiskColumn>
                  </RiskGroup>
                  <EmailLabel>E-mails para comunicação do encerramento (separados por ;):</EmailLabel>
                  <EmailBox>
                    <Misspelled>email</Misspelled>.teste@invalido.com.br
                    <CornerDot $color="#e02020" />
                  </EmailBox>
                  <EvidenceBox>
                    Evidência obrigatória
                    <Toggle>NÃO</Toggle>
                  </EvidenceBox>
                </FormColumn>
                <FormScroll>
                  <FaCaretUp />
                  <i />
                  <FaCaretDown />
                </FormScroll>
              </RightBody>
              <ActionBar>
                <ActionButton $width={51}>
                  <FaTimes />
                  Cancelar
                </ActionButton>
                <ActionSep />
                <ActionButton $width={77}>
                  <FaFlag />
                  Encerrar informe
                </ActionButton>
                <ActionSpacer />
                <ActionButton $width={15}>
                  <FiClock />
                </ActionButton>
                <ActionSave $width={42}>
                  <FiUploadCloud />
                  Salvar
                </ActionSave>
              </ActionBar>
            </RightPanel>
          </Workspace>
          <StatusBar>
            LICENCIADO PARA:
            <Brand margin={12} />
            <StatusRight>
              <StatusDivider $margin={0} />
              <StatusGlyph $margin={4} $color="#222" $size={9}>
                <PulseMark viewBox="0 0 12 8">
                  <rect width="12" height="8" fill="#222" />
                  <path d="M0 4h3l1.5-3 2 6L8 4h4" fill="none" stroke="#fff" strokeWidth="0.8" />
                </PulseMark>
              </StatusGlyph>
              <StatusText $size={6.2} $margin={0}>
                3.18 Mbps
              </StatusText>
              <GaugeMark viewBox="0 0 18 11">
                <path d="M2 11a7 7 0 0 1 14 0" fill="none" stroke="#8aa820" strokeWidth="4" />
              </GaugeMark>
              <StatusText $size={6.2} $margin={4}>
                59m55s
              </StatusText>
              <StatusGlyph $margin={14} $color="#222" $size={11}>
                <FaEye />
              </StatusGlyph>
              <StatusText $size={7.4} $strong $margin={1}>
                0.9R456
              </StatusText>
              <StatusDivider $margin={12} />
              <StatusText $size={8} $strong $margin={9}>
                SLA
              </StatusText>
              <StatusDivider $margin={6} />
              <StatusGlyph $margin={3} $color="#999" $size={7}>
                <FaCaretDown />
              </StatusGlyph>
              <StatusGlyph $margin={8} $color="#888" $size={10}>
                <FaFileAlt />
              </StatusGlyph>
              <StatusGlyph $margin={3} $color="#c03030" $size={9}>
                <FaCalendarCheck />
              </StatusGlyph>
              <Brand margin={17} />
              <StatusGlyph $margin={12} $color="#222" $size={10}>
                <FaExpand />
              </StatusGlyph>
              <GreenDot />
            </StatusRight>
          </StatusBar>
        </Main>
      </Body>
    </Frame>

    <RedBox $x={3} $y={131} $w={150} $h={16} />
    <RedBox $x={3} $y={197} $w={150} $h={16} />
    <RedBox $x={769} $y={466} $w={151} $h={16} />
    <RedBox $x={1147} $y={561} $w={58} $h={29} />

    <Callout $x={161} $y={115} $w={72} $h={48}>
      <svg viewBox="0 0 72 48">
        <polygon points="0,24 22,0 22,13 72,13 72,35 22,35 22,48" fill="#f00" />
      </svg>
      <CalloutText $center={41}>1</CalloutText>
    </Callout>
    <Callout $x={161} $y={178} $w={73} $h={48}>
      <svg viewBox="0 0 73 48">
        <polygon points="0,24 22,0 22,13 73,13 73,37 22,37 22,48" fill="#f00" />
      </svg>
      <CalloutText $center={41}>1.1</CalloutText>
    </Callout>
    <Callout $x={928} $y={453} $w={73} $h={42}>
      <svg viewBox="0 0 73 42">
        <polygon points="0,20 22,0 22,10 73,10 73,31 22,31 22,42" fill="#f00" />
      </svg>
      <CalloutText $center={44}>1.2</CalloutText>
    </Callout>
    <Callout $x={1063} $y={553} $w={84} $h={47}>
      <svg viewBox="0 0 84 47">
        <polygon points="0,12 63,12 63,0 84,23 63,47 63,35 0,35" fill="#f00" />
      </svg>
      <CalloutText $center={38}>1.3</CalloutText>
    </Callout>
  </Page>
);

export default App;
